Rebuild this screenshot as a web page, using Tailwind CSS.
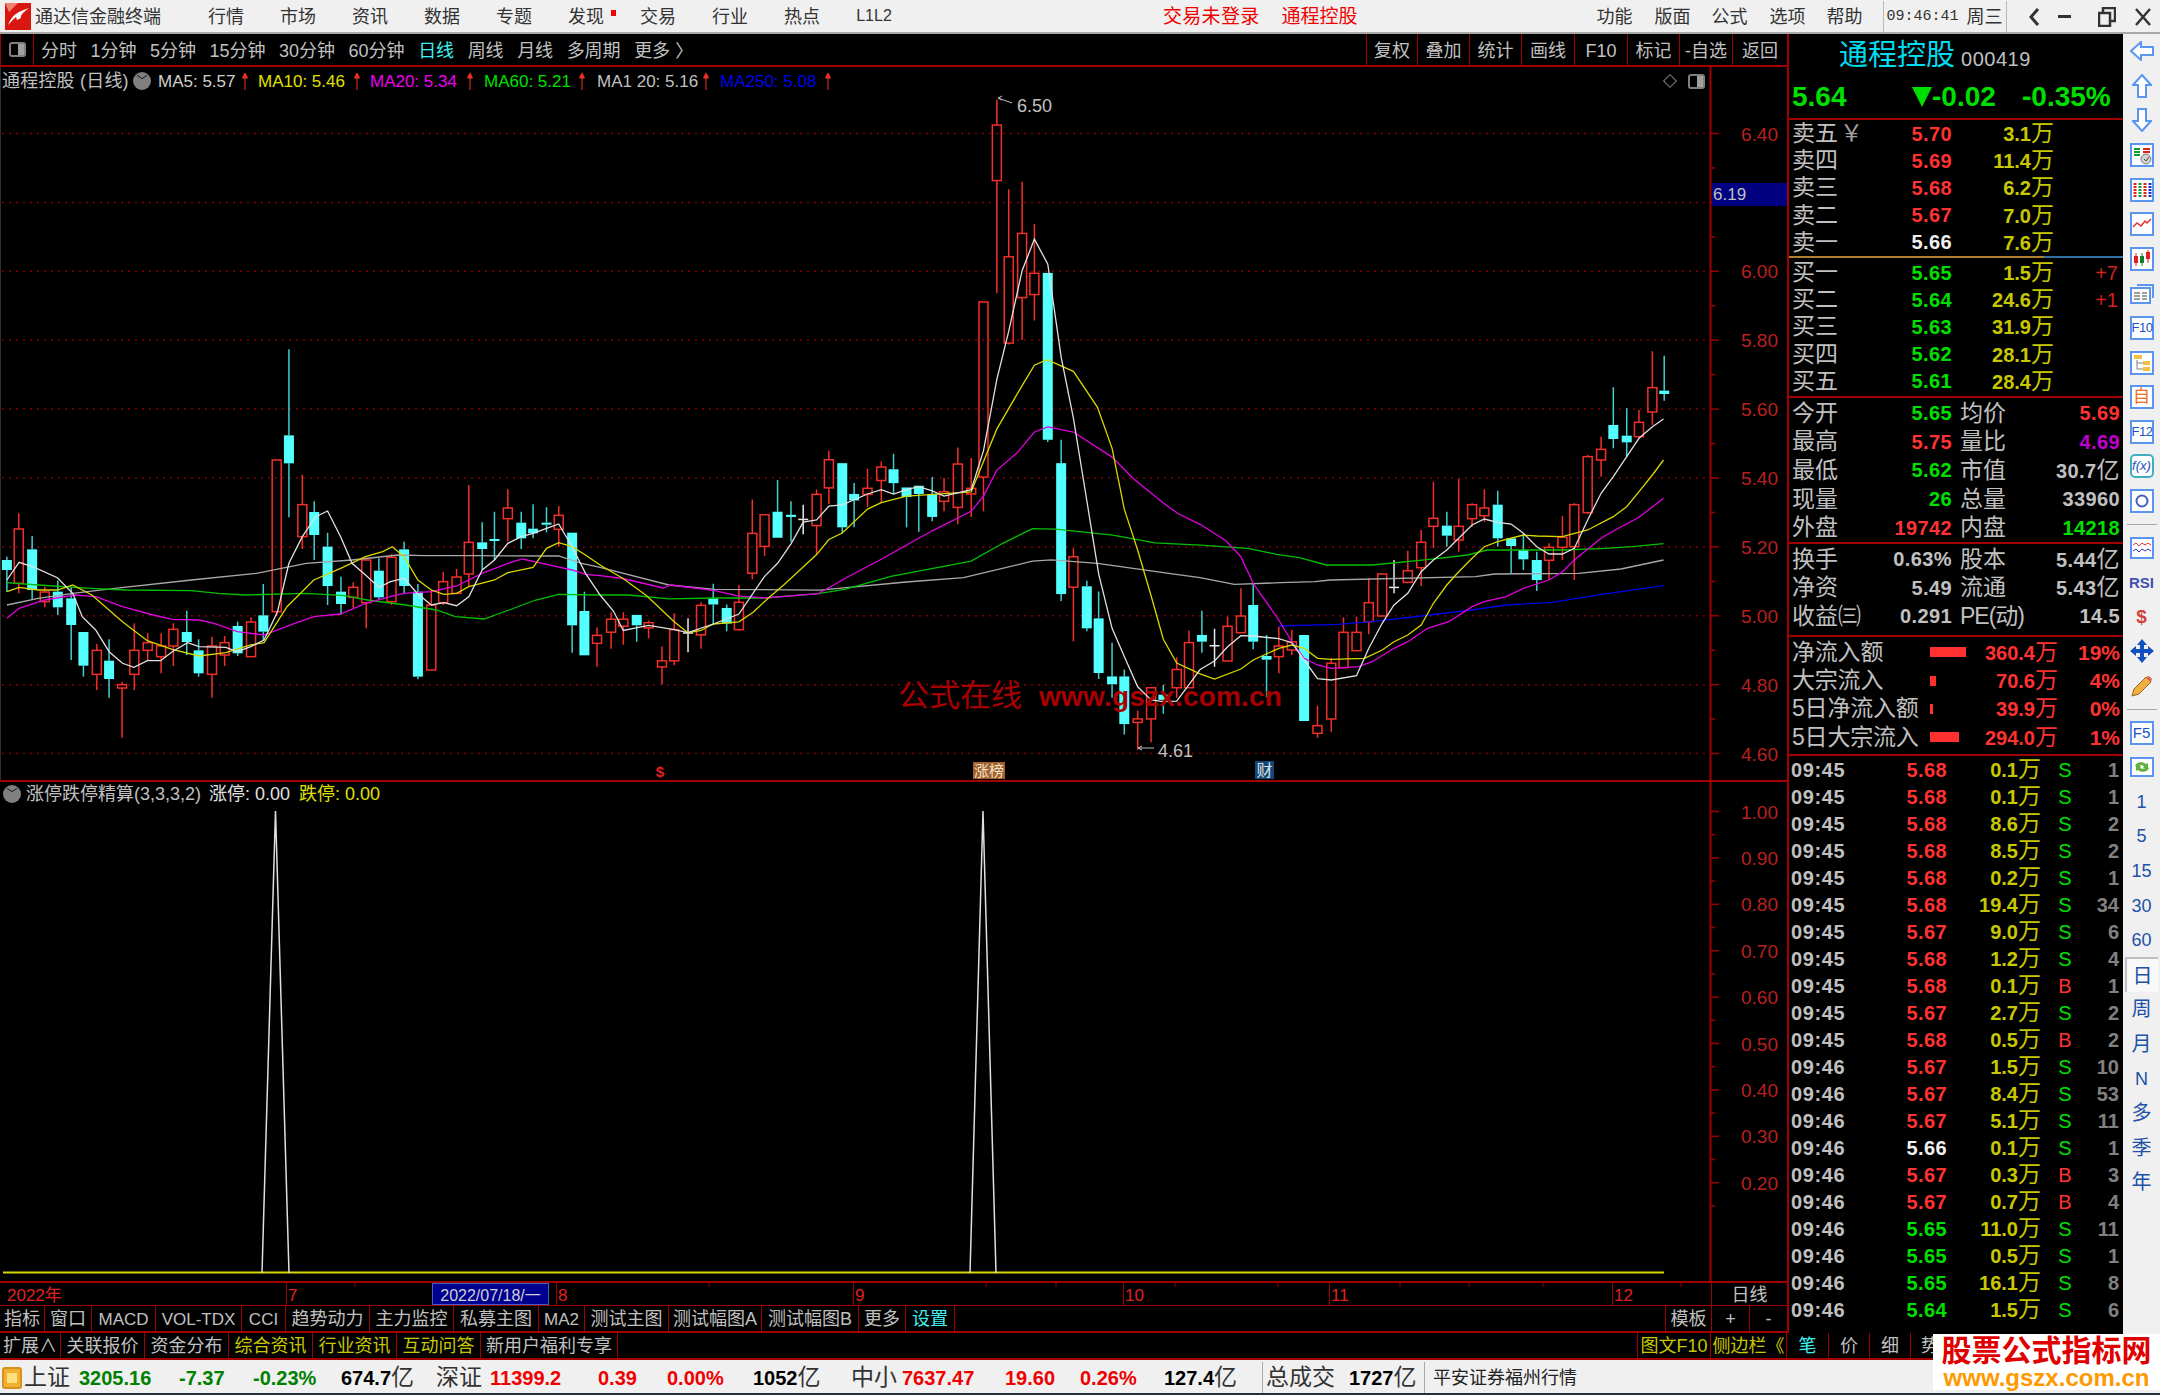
<!DOCTYPE html>
<html lang="zh">
<head>
  <meta charset="UTF-8" />
  <title>通达信金融终端</title>
  <script src="https://cdn.jsdelivr.net/npm/@tailwindcss/browser@4"></script>
</head>
<body class="w-[2160px] h-[1395px] overflow-hidden flex flex-col bg-black text-[18px] text-[#c0c0c0] font-['Liberation_Sans','Noto_Sans_CJK_SC',sans-serif]">

  <!-- title bar -->
  <header class="h-[34px] shrink-0 flex items-center pt-[1px] bg-[#f0f0f0] border-b-2 border-[#a8a8a8] text-[#333] leading-none">
    <svg class="ml-[5px] w-[26px] h-[27px]" viewBox="0 0 26 27"><rect width="26" height="27" fill="#d81810"/><path d="M0 0h13L4 9z" fill="#f08070"/><path d="M3 22C7 12 12 9 24 5 17 10 15 13 16 15l-4 2-1-3c-3 2-5 5-8 8z" fill="#fff"/></svg>
    <span class="ml-[4px] w-[155px]">通达信金融终端</span>
    <nav class="flex">
      <span class="w-[72px] text-center">行情</span>
      <span class="w-[72px] text-center">市场</span>
      <span class="w-[72px] text-center">资讯</span>
      <span class="w-[72px] text-center">数据</span>
      <span class="w-[72px] text-center">专题</span>
      <span class="w-[72px] text-center relative">发现<i class="absolute left-[61px] top-[2px] w-[5px] h-[6px] bg-[#f00000]"></i></span>
      <span class="w-[72px] text-center">交易</span>
      <span class="w-[72px] text-center">行业</span>
      <span class="w-[72px] text-center">热点</span>
      <span class="w-[72px] text-center text-[16px]">L1L2</span>
    </nav>
    <span class="ml-[253px] text-[19px] text-[#f00000] tracking-[0.3px]">交易未登录</span>
    <span class="ml-[22px] text-[19px] text-[#f00000]">通程控股</span>
    <span class="ml-[239px]">功能</span>
    <span class="ml-[22px]">版面</span>
    <span class="ml-[21px]">公式</span>
    <span class="ml-[22px]">选项</span>
    <span class="ml-[21px]">帮助</span>
    <span class="ml-[20px] h-full border-l border-[#b8b8b8] pl-[3px] flex items-center font-['Liberation_Mono'] text-[15px] w-[84px]">09:46:41</span>
    <span>周三</span>
    <span class="ml-[3px] h-full border-l border-[#b8b8b8]"></span>
    <svg class="ml-[21px] w-[12px] h-[18px]" viewBox="0 0 12 18"><path d="M10 1 3 9l7 8" fill="none" stroke="#333" stroke-width="3"/></svg>
    <span class="ml-[18px] w-[13px] h-[3px] bg-[#333]"></span>
    <svg class="ml-[27px] w-[18px] h-[20px]" viewBox="0 0 18 20"><path d="M5 6V1h12v13h-5M1 6h11v13H1z" fill="none" stroke="#333" stroke-width="2.5"/></svg>
    <svg class="ml-[19px] w-[16px] h-[18px]" viewBox="0 0 16 18"><path d="M1 1l14 16M15 1 1 17" fill="none" stroke="#333" stroke-width="2.5"/></svg>
  </header>

  <div class="h-[1326px] shrink-0 flex">
    <div class="w-[2123px] flex flex-col">
      <div class="h-[1299px] flex">

        <!-- chart column -->
        <section class="w-[1787px] flex flex-col">
          <div class="h-[33px] flex items-center border-b-2 border-[#a00000]">
            <div class="w-[34px] h-full flex items-center justify-center border-l border-r border-[#a00000]">
              <span class="w-[17px] h-[15px] rounded-[3px] border-2 border-[#808080] flex justify-end"><i class="w-[6px] bg-[#a0a0a0]"></i></span>
            </div>
            <div class="ml-[7px] pt-[3px] flex gap-[13.5px]">
              <span>分时</span><span>1分钟</span><span>5分钟</span><span>15分钟</span><span>30分钟</span><span>60分钟</span>
              <span class="text-[#40f0f0]">日线</span><span>周线</span><span>月线</span><span>多周期</span><span>更多 〉</span>
            </div>
            <div class="ml-auto h-full flex">
              <span class="w-[51px] text-center border-l border-[#a00000] leading-[34px]">复权</span>
              <span class="w-[52px] text-center border-l border-[#a00000] leading-[34px]">叠加</span>
              <span class="w-[52px] text-center border-l border-[#a00000] leading-[34px]">统计</span>
              <span class="w-[53px] text-center border-l border-[#a00000] leading-[34px]">画线</span>
              <span class="w-[53px] text-center border-l border-[#a00000] leading-[34px]">F10</span>
              <span class="w-[52px] text-center border-l border-[#a00000] leading-[34px]">标记</span>
              <span class="w-[53px] text-center border-l border-[#a00000] leading-[34px]">-自选</span>
              <span class="w-[55px] text-center border-l border-[#a00000] leading-[34px]">返回</span>
            </div>
          </div>

          <!-- main k-line pane -->
          <div class="relative h-[713px] border-l border-[#303030]">
            <svg id="kline" class="block w-[1787px] h-[713px] -ml-[1px]" viewBox="0 67 1787 713"></svg>
            <div class="absolute left-[1px] top-[4px] flex items-center h-[20px] text-[17px] leading-none whitespace-nowrap">
              <span class="w-[124px] text-[18px] tracking-[0.2px]">通程控股 (日线)</span>
              <span class="ml-[7px] w-[18px] h-[18px] rounded-full bg-[#808080] flex items-center justify-center text-black text-[11px]">﹀</span>
              <span class="ml-[7px] w-[84px] text-[#d0d0d0]">MA5: 5.57</span>
              <svg class="w-[6px] h-[18px]" viewBox="0 0 6 18"><path d="M3 18V2M.5 6 3 1l2.500 5z" fill="#f03020" stroke="#f03020"/></svg>
              <span class="ml-[10px] w-[96px] text-[#e0e000]">MA10: 5.46</span>
              <svg class="w-[6px] h-[18px]" viewBox="0 0 6 18"><path d="M3 18V2M.5 6 3 1l2.500 5z" fill="#f03020" stroke="#f03020"/></svg>
              <span class="ml-[10px] w-[97px] text-[#f000f0]">MA20: 5.34</span>
              <svg class="w-[6px] h-[18px]" viewBox="0 0 6 18"><path d="M3 18V2M.5 6 3 1l2.500 5z" fill="#f03020" stroke="#f03020"/></svg>
              <span class="ml-[11px] w-[95px] text-[#00e000]">MA60: 5.21</span>
              <svg class="w-[6px] h-[18px]" viewBox="0 0 6 18"><path d="M3 18V2M.5 6 3 1l2.500 5z" fill="#f03020" stroke="#f03020"/></svg>
              <span class="ml-[12px] w-[106px] text-[#c0c0c0]">MA1 20: 5.16</span>
              <svg class="w-[6px] h-[18px]" viewBox="0 0 6 18"><path d="M3 18V2M.5 6 3 1l2.500 5z" fill="#f03020" stroke="#f03020"/></svg>
              <span class="ml-[11px] w-[105px] text-[#0000e8]">MA250: 5.08</span>
              <svg class="w-[6px] h-[18px]" viewBox="0 0 6 18"><path d="M3 18V2M.5 6 3 1l2.500 5z" fill="#f03020" stroke="#f03020"/></svg>
            </div>
            <div class="absolute left-[1661px] top-[6px] w-[15px] h-[15px] flex items-center justify-center">
              <i class="w-[10px] h-[10px] rotate-45 border border-[#808080]"></i>
            </div>
            <span class="absolute left-[1687px] top-[7px] w-[17px] h-[15px] rounded-[3px] border-2 border-[#808080] flex justify-end"><i class="w-[6px] bg-[#a0a0a0]"></i></span>
            <div class="absolute left-[1711px] top-[116px] w-[75px] h-[23px] bg-[#000080] text-[17px] leading-[24px] pl-[1px]">6.19</div>
          </div>
          <div class="h-[2px] bg-[#a00000]"></div>

          <!-- indicator pane -->
          <div class="relative h-[499px]">
            <svg id="pane2" class="block w-[1787px] h-[499px]" viewBox="0 782 1787 499"></svg>
            <div class="absolute left-[3px] top-[2px] h-[20px] flex items-center text-[18px] leading-none whitespace-nowrap">
              <span class="w-[18px] h-[18px] rounded-full bg-[#808080] flex items-center justify-center text-black text-[11px]">﹀</span>
              <span class="ml-[5px] w-[183px]">涨停跌停精算(3,3,3,2)</span>
              <span class="w-[90px] text-[#e0e0e0]">涨停: 0.00</span>
              <span class="text-[#e0e000]">跌停: 0.00</span>
            </div>
          </div>

          <!-- date row -->
          <div class="relative h-[24px] flex border-t-2 border-[#a00000] text-[17px] text-[#e02020] leading-[25px]">
            <span class="w-[286px] pl-[7px]">2022年</span>
            <span class="w-[146px] pl-[1px] border-l border-[#a00000]">7</span>
            <span class="w-[117px] text-center text-[#d0d0d0] bg-[#000090] border border-[#4060c0] text-[16px] leading-[23px]">2022/07/18/一</span>
            <span class="w-[7px]"></span>
            <span class="w-[297px] pl-[1px] border-l border-[#a00000]">8</span>
            <span class="w-[270px] pl-[1px] border-l border-[#a00000]">9</span>
            <span class="w-[206px] pl-[1px] border-l border-[#a00000]">10</span>
            <span class="w-[283px] pl-[1px] border-l border-[#a00000]">11</span>
            <span class="w-[99px] pl-[1px] border-l border-[#a00000]">12</span>
            <span class="flex-1 text-center text-[#c0c0c0] text-[18px] border-l border-[#a00000]">日线</span>
            <svg class="absolute left-0 top-0 w-[1711px] h-[4px]" viewBox="0 0 1711 4"><path d="M355 0v4M709 0v4M986 0v4M1056 0v4M1175 0v4M1278 0v4M1400 0v4M1469 0v4M1543 0v4M1681 0v4" stroke="#a00000"/></svg>
          </div>

          <!-- button row -->
          <div class="h-[28px] flex border-t border-b-2 border-[#a00000] leading-[27px] whitespace-nowrap">
            <span class="w-[45px] text-center border-r border-[#a00000]">指标</span>
            <span class="w-[47px] text-center border-r border-[#a00000]">窗口</span>
            <span class="w-[64px] text-center border-r border-[#a00000] text-[17px]">MACD</span>
            <span class="w-[86px] text-center border-r border-[#a00000] text-[17px]">VOL-TDX</span>
            <span class="w-[44px] text-center border-r border-[#a00000] text-[17px]">CCI</span>
            <span class="w-[84px] text-center border-r border-[#a00000]">趋势动力</span>
            <span class="w-[84px] text-center border-r border-[#a00000]">主力监控</span>
            <span class="w-[85px] text-center border-r border-[#a00000]">私募主图</span>
            <span class="w-[46px] text-center border-r border-[#a00000] text-[17px]">MA2</span>
            <span class="w-[84px] text-center border-r border-[#a00000]">测试主图</span>
            <span class="w-[93px] text-center border-r border-[#a00000]">测试幅图A</span>
            <span class="w-[97px] text-center border-r border-[#a00000]">测试幅图B</span>
            <span class="w-[47px] text-center border-r border-[#a00000]">更多</span>
            <span class="w-[49px] text-center border-r border-[#a00000] text-[#40f0f0]">设置</span>
            <span class="flex-1"></span>
            <span class="w-[46px] text-center border-l border-[#a00000]">模板</span>
            <span class="w-[38px] text-center border-l border-[#a00000]">+</span>
            <span class="w-[38px] text-center border-l border-[#a00000]">-</span>
          </div>
        </section>

        <!-- quote panel -->
        <aside class="w-[336px] flex flex-col border-l-2 border-[#a00000] whitespace-nowrap">
          <div class="h-[42px] flex items-end pl-[50px]">
            <span class="text-[29px] leading-[42px] text-[#00dcf0]">通程控股</span>
            <span class="ml-[6px] text-[20px] leading-[34px] tracking-[0.5px]">000419</span>
          </div>
          <div class="h-[44px] flex items-center border-b-2 border-[#a00000] pl-[3px] font-bold text-[28px] text-[#00e000] leading-none">
            <span class="w-[120px]">5.64</span>
            <svg class="w-[20px] h-[20px]" viewBox="0 0 20 20"><path d="M0 0h20L10 20z" fill="#00e000"/></svg>
            <span class="w-[90px]">-0.02</span>
            <span>-0.35%</span>
          </div>
          <div id="sell" class="h-[136px]"></div>
          <div class="h-[2px] flex"><i class="w-[255px] bg-[#b08030]"></i><i class="flex-1 bg-[#3070a0]"></i></div>
          <div id="buy" class="h-[138px] pt-[1px]"></div>
          <div class="h-[2px] bg-[#a00000]"></div>

          <div id="stats1" class="h-[144px] pt-[1px]"></div>
          <div class="h-[2px] bg-[#a00000]"></div>
          <div id="stats2" class="h-[91px] pt-[1px]"></div>
          <div class="h-[2px] bg-[#a00000]"></div>

          <div id="flow" class="h-[117px] pt-[1px]"></div>
          <div class="h-[2px] bg-[#a00000]"></div>

          <div id="ticks" class="flex-1"></div>
        </aside>
      </div>

      <!-- second button row -->
      <div class="h-[27px] flex border-b-2 border-[#a00000] leading-[27px] whitespace-nowrap">
        <span class="w-[61px] text-center border-r border-[#a00000]">扩展∧</span>
        <span class="w-[84px] text-center border-r border-[#a00000]">关联报价</span>
        <span class="w-[84px] text-center border-r border-[#a00000]">资金分布</span>
        <span class="w-[84px] text-center border-r border-[#a00000] text-[#c8c800]">综合资讯</span>
        <span class="w-[84px] text-center border-r border-[#a00000] text-[#c8c800]">行业资讯</span>
        <span class="w-[84px] text-center border-r border-[#a00000] text-[#c8c800]">互动问答</span>
        <span class="w-[137px] text-center border-r border-[#a00000]">新用户福利专享</span>
        <span class="w-[1019px]"></span>
        <span class="w-[73px] text-center border-l border-[#a00000] text-[#c8c800]">图文F10</span>
        <span class="w-[76px] text-center border-l border-[#a00000] text-[#c8c800]">侧边栏《</span>
        <span class="w-[42px] text-center border-l border-[#a00000] text-[#40f0f0]">笔</span>
        <span class="w-[41px] text-center border-l border-[#a00000]">价</span>
        <span class="w-[41px] text-center border-l border-[#a00000]">细</span>
        <span class="w-[42px] pl-[10px] border-l border-[#a00000]">势</span>
      </div>
    </div>

    <!-- right icon strip -->
    <nav id="strip" class="w-[37px] bg-[#f0f0f0] flex flex-col items-center text-[#2050a8] text-[18px] leading-none">
      <div class="h-[34.6px] flex items-center"><svg class="w-[24px] h-[20px]" viewBox="0 0 24 20"><path d="M1 10 11 1v5h12v8H11v5z" fill="#fff" stroke="#5a96f0" stroke-width="2"/></svg></div>
      <div class="h-[34.6px] flex items-center"><svg class="w-[20px] h-[24px]" viewBox="0 0 20 24"><path d="M10 1l9 10h-5v12H6V11H1z" fill="#fff" stroke="#5a96f0" stroke-width="2"/></svg></div>
      <div class="h-[34.6px] flex items-center"><svg class="w-[20px] h-[24px]" viewBox="0 0 20 24"><path d="M10 23l9-10h-5V1H6v12H1z" fill="#fff" stroke="#5a96f0" stroke-width="2"/></svg></div>
      <div class="h-[34.6px] flex items-center"><svg class="w-[24px] h-[24px]" viewBox="0 0 24 24"><rect x="1" y="1" width="22" height="22" fill="#fff" stroke="#5a96f0" stroke-width="2"/><path d="M4 6h6M4 9h6M4 12h6" stroke="#10a030" stroke-width="2"/><path d="M13 6h7M13 9h7M13 12h4" stroke="#e02020" stroke-width="2"/><circle cx="16" cy="16" r="5" fill="#d0d0d0" stroke="#808080"/><path d="M14 16l2 2 3-4" fill="none" stroke="#505050"/></svg></div>
      <div class="h-[34.6px] flex items-center"><svg class="w-[24px] h-[24px]" viewBox="0 0 24 24"><rect x="1" y="1" width="22" height="22" fill="#fff" stroke="#5a96f0" stroke-width="2"/><path d="M5 5v14" stroke="#e02020" stroke-width="3" stroke-dasharray="2 1"/><path d="M10 5v14" stroke="#10a030" stroke-width="3" stroke-dasharray="2 1"/><path d="M15 5v14" stroke="#e02020" stroke-width="3" stroke-dasharray="2 1"/><path d="M20 5v14" stroke="#2030d0" stroke-width="3" stroke-dasharray="2 1"/></svg></div>
      <div class="h-[34.6px] flex items-center"><svg class="w-[24px] h-[24px]" viewBox="0 0 24 24"><rect x="1" y="1" width="22" height="22" fill="#fff" stroke="#5a96f0" stroke-width="2"/><path d="M3 15l4-4 4 3 4-5 2 2 4-4" fill="none" stroke="#e83030" stroke-width="1.500"/></svg></div>
      <div class="h-[34.6px] flex items-center"><svg class="w-[24px] h-[24px]" viewBox="0 0 24 24"><rect x="1" y="1" width="22" height="22" fill="#fff" stroke="#5a96f0" stroke-width="2"/><path d="M6 6v13M18 3v13" stroke="#e02020"/><path d="M12 6v13" stroke="#108030"/><rect x="4" y="9" width="4" height="7" fill="#e02020"/><rect x="10" y="9" width="4" height="7" fill="#108030"/><rect x="16" y="5" width="4" height="7" fill="#e02020"/></svg></div>
      <div class="h-[34.6px] flex items-center"><svg class="w-[24px] h-[22px]" viewBox="0 0 24 22"><path d="M7 3h16v13" fill="none" stroke="#5a96f0" stroke-width="2"/><rect x="1" y="6" width="19" height="15" fill="#fff" stroke="#5a96f0" stroke-width="2"/><path d="M4 11h6M12 11h5M4 14h6M12 14h5M4 17h6M12 17h5" stroke="#808080" stroke-width="1.500"/></svg></div>
      <div class="h-[34.6px] flex items-center"><span class="w-[24px] h-[24px] border-2 border-[#5a96f0] bg-white text-[#2050c0] text-[13px] tracking-[-0.5px] leading-[20px] text-center">F10</span></div>
      <div class="h-[34.6px] flex items-center"><svg class="w-[24px] h-[24px]" viewBox="0 0 24 24"><rect x="1" y="1" width="22" height="22" fill="#fff" stroke="#5a96f0" stroke-width="2"/><path d="M7 9v9h6M7 12h6" fill="none" stroke="#808080"/><rect x="4" y="4" width="8" height="4" fill="#f0c040"/><rect x="13" y="10" width="7" height="4" fill="#f0c040"/><rect x="13" y="16" width="7" height="4" fill="#f0c040"/></svg></div>
      <div class="h-[34.6px] flex items-center"><span class="w-[24px] h-[24px] border-2 border-[#5a96f0] bg-white text-[#f07020] text-[17px] leading-[20px] text-center">自</span></div>
      <div class="h-[34.6px] flex items-center"><span class="w-[24px] h-[24px] border-2 border-[#5a96f0] bg-white text-[#2050c0] text-[13px] tracking-[-0.5px] leading-[20px] text-center">F12</span></div>
      <div class="h-[34.6px] flex items-center"><span class="w-[24px] h-[24px] border-2 rounded-[5px] border-[#40b0c0] bg-white text-[#2050c0] text-[13px] italic leading-[20px] text-center">f(x)</span></div>
      <div class="h-[34.6px] flex items-center"><svg class="w-[24px] h-[24px]" viewBox="0 0 24 24"><rect x="1" y="1" width="22" height="22" fill="#fff" stroke="#5a96f0" stroke-width="2"/><circle cx="12" cy="12" r="5.500" fill="none" stroke="#4060c0" stroke-width="2"/></svg></div>
      <div class="h-[12px] flex items-center w-[30px]"><i class="w-full h-[1px] bg-[#a8a8a8]"></i></div>
      <div class="h-[34.6px] flex items-center"><svg class="w-[24px] h-[22px]" viewBox="0 0 24 22"><rect x="1" y="1" width="22" height="20" fill="#fff" stroke="#5a96f0" stroke-width="2"/><path d="M3 8l3-2 3 3 3-3 3 2 3-2 3 2" fill="none" stroke="#e03030"/><path d="M3 14l3-2 3 3 3-3 3 2 3-2 3 2" fill="none" stroke="#3030d0"/></svg></div>
      <div class="h-[34.6px] flex items-center text-[15px] font-bold text-[#4050b0]">RSI</div>
      <div class="h-[34.6px] flex items-center text-[19px] font-bold text-[#d04040]">$</div>
      <div class="h-[34.6px] flex items-center"><svg class="w-[24px] h-[24px]" viewBox="0 0 24 24"><path d="M12 0l5 6h-3v4h4V7l6 5-6 5v-3h-4v4h3l-5 6-5-6h3v-4H6v3l-6-5 6-5v3h4V6H7z" fill="#1050c0"/></svg></div>
      <div class="h-[34.6px] flex items-center"><svg class="w-[22px] h-[22px]" viewBox="0 0 22 22"><path d="M1 21l2-7L15 2l5 5L8 19z" fill="#f0b040" stroke="#a06020"/><path d="M15 2l5 5 1-3-3-3z" fill="#e06060"/></svg></div>
      <div class="h-[12px] flex items-center w-[30px]"><i class="w-full h-[1px] bg-[#a8a8a8]"></i></div>
      <div class="h-[34.6px] flex items-center"><span class="w-[24px] h-[24px] border-2 border-[#5a96f0] bg-white text-[#2050c0] text-[15px] leading-[20px] text-center">F5</span></div>
      <div class="h-[34.6px] flex items-center"><svg class="w-[24px] h-[20px]" viewBox="0 0 24 20"><rect x="1" y="1" width="22" height="18" fill="#fff" stroke="#5a96f0" stroke-width="2"/><path d="M5 9c1-4 8-5 11-2l2-1v5h-5l1-2c-2-1-5-1-6 1zM19 11c-1 4-8 5-11 2l-2 1V9h5l-1 2c2 1 5 1 6-1z" fill="#60b040"/></svg></div>
      <div class="h-[34.6px] flex items-center">1</div>
      <div class="h-[34.6px] flex items-center">5</div>
      <div class="h-[34.6px] flex items-center">15</div>
      <div class="h-[34.6px] flex items-center">30</div>
      <div class="h-[34.6px] flex items-center">60</div>
      <div class="h-[34.6px] w-[33px] flex items-center justify-center border-t-2 border-l-2 border-[#c0c0c0] bg-[#f8f8f8] text-[20px]">日</div>
      <div class="h-[34.6px] flex items-center text-[20px]">周</div>
      <div class="h-[34.6px] flex items-center text-[20px]">月</div>
      <div class="h-[34.6px] flex items-center">N</div>
      <div class="h-[34.6px] flex items-center text-[20px]">多</div>
      <div class="h-[34.6px] flex items-center text-[20px]">季</div>
      <div class="h-[34.6px] flex items-center text-[20px]">年</div>
    </nav>
  </div>

  <!-- status bar -->
  <footer class="h-[33px] shrink-0 flex items-center pt-[2px] bg-[#f0f0f0] text-[20px] font-bold text-black leading-none whitespace-nowrap">
    <span class="ml-[2px] w-[20px] h-[22px] rounded-[3px] bg-[#f0b030] border-2 border-[#d89020] flex items-center justify-center"><i class="w-[10px] h-[10px] bg-[#ffe080]"></i></span>
    <span class="ml-[2px] w-[55px] text-[23px] font-normal text-[#333]">上证</span>
    <span class="w-[100px] text-[#008000]">3205.16</span>
    <span class="w-[74px] text-[#008000]">-7.37</span>
    <span class="w-[88px] text-[#008000]">-0.23%</span>
    <span class="w-[95px]">674.7<span class="text-[23px] font-normal text-[#333]">亿</span></span>
    <span class="w-[54px] text-[23px] font-normal text-[#333]">深证</span>
    <span class="w-[108px] text-[#f00000]">11399.2</span>
    <span class="w-[69px] text-[#f00000]">0.39</span>
    <span class="w-[86px] text-[#f00000]">0.00%</span>
    <span class="w-[98px]">1052<span class="text-[23px] font-normal text-[#333]">亿</span></span>
    <span class="w-[51px] text-[23px] font-normal text-[#333]">中小</span>
    <span class="w-[103px] text-[#f00000]">7637.47</span>
    <span class="w-[75px] text-[#f00000]">19.60</span>
    <span class="w-[84px] text-[#f00000]">0.26%</span>
    <span class="w-[98px]">127.4<span class="text-[23px] font-normal text-[#333]">亿</span></span>
    <span class="h-full border-l border-[#a8a8a8] pl-[3px] w-[87px] flex items-center text-[23px] font-normal text-[#333]">总成交</span>
    <span class="w-[75px]">1727<span class="text-[23px] font-normal text-[#333]">亿</span></span>
    <span class="h-full border-l border-[#a8a8a8] pl-[8px] flex items-center text-[18px] font-normal text-[#222]">平安证券福州行情</span>
  </footer>
  <div class="h-[2px] shrink-0 bg-[#203040]"></div>

  <!-- site stamp in the corner -->
  <div class="absolute left-[1933px] top-[1334px] w-[227px] h-[56px] bg-white flex flex-col items-center pt-[2px] leading-none">
    <span class="text-[30px] font-bold text-[#e00000]">股票公式指标网</span>
    <span class="text-[24px] font-bold text-[#ff9900]">www.gszx.com.cn</span>
  </div>

<script>
// candles and moving averages were read off three stretches of the chart,
// each with its own x offset and vertical scale
const stretches = [
  { x0: 0, y0: 330, sy: 3,
    bars: [[18,0,680,690,720,785],[49,1,550,597,760,790],[84,0,618,658,780,810],[117,1,770,786,815,832],[151,0,752,785,832,855],[186,0,770,805,885,990],[218,0,906,906,1007,1040],[253,1,942,961,1033,1080],[285,0,928,992,1047,1103],[319,1,1055,1064,1074,1223],[351,1,880,961,1033,1080],[386,1,910,938,961,990],[421,1,910,948,980,1030],[453,1,880,898,948,1008],[488,0,842,906,936,975],[519,0,928,961,1030,1040],[554,1,920,948,1033,1103],[587,1,918,938,975,1008],[621,0,875,888,970,978],[656,1,862,876,980,980],[688,0,762,856,905,930],[723,1,390,390,845,858],[755,0,58,316,400,562],[790,1,434,524,620,657],[821,0,514,546,615,690],[856,0,608,650,768,825],[891,0,740,785,822,855],[923,1,757,772,802,835],[957,1,685,690,818,895],[990,0,685,722,802,808],[1023,1,672,682,815,825],[1056,0,635,658,768,790],[1092,0,762,785,1040,1048],[1127,1,780,825,1020,1020],[1158,1,725,755,818,825],[1193,1,717,741,790,790],[1225,1,465,637,732,770],[1260,0,577,637,657,720],[1292,0,545,627,633,690],[1327,1,478,534,566,634],[1362,0,545,578,625,657],[1393,0,523,596,610,625],[1428,0,532,578,584,607],[1460,1,528,556,598,650],[1495,0,608,608,886,968],[1527,0,785,843,976,976],[1560,1,892,916,940,1010]],
    ma5: [[18,750],[50,697],[90,712],[150,743],[190,790],[215,860],[250,900],[285,965],[320,1000],[350,1012],[385,992],[420,992],[450,965],[490,938],[520,950],[590,952],[620,965],[655,950],[690,930],[725,845],[755,700],[790,620],[825,560],[856,543],[890,620],[920,700],[955,735],[990,772],[1020,755],[1056,745],[1090,790],[1127,825],[1160,818],[1193,827],[1225,800],[1260,720],[1292,690],[1327,640],[1362,620],[1393,610],[1428,595],[1460,582],[1495,650],[1530,730],[1568,795]],
    ma10: [[18,785],[50,772],[100,780],[150,780],[190,765],[240,795],[320,875],[385,932],[450,958],[520,978],[590,968],[655,945],[690,938],[750,830],[820,750],[890,715],[955,680],[1000,665],[1025,650],[1056,680],[1092,750],[1127,780],[1160,793],[1193,790],[1225,770],[1292,750],[1327,728],[1393,712],[1428,655],[1460,638],[1495,650],[1530,675],[1568,705]],
    ma20: [[18,865],[50,835],[117,810],[195,795],[250,800],[320,830],[400,855],[450,868],[520,870],[560,880],[620,905],[690,915],[770,880],[820,860],[890,852],[955,820],[1020,800],[1056,790],[1127,785],[1193,768],[1260,730],[1327,700],[1365,687],[1428,703],[1495,720],[1530,733],[1568,737]],
    ma60: [[18,758],[100,765],[235,775],[330,780],[500,782],[570,790],[640,795],[800,790],[900,797],[960,810],[1060,825],[1140,840],[1190,860],[1265,867],[1330,840],[1400,810],[1460,793],[1568,795]],
    ma120: [[18,825],[100,805],[190,790],[300,775],[500,750],[670,730],[800,700],[920,690],[1040,675],[1110,677],[1240,677],[1460,678],[1520,700],[1568,712]],
    ma250: [] },
  { x0: 600, y0: 80, sy: 2.307,
    bars: [[29,1,1228,1244,1274,1312],[61,1,1228,1244,1260,1303],[96,0,1234,1234,1258,1296],[127,1,1247,1252,1264,1288],[162,1,1307,1340,1354,1394],[194,1,1230,1268,1340,1350],[230,2,1242,1274,1277,1320],[264,1,1205,1212,1280,1312],[296,0,1162,1196,1210,1258],[331,0,1210,1218,1254,1272],[363,1,1165,1205,1268,1270],[398,1,968,1046,1138,1152],[430,1,1003,1003,1076,1098],[464,0,923,996,1056,1056],[499,0,972,1003,1008,1065],[531,2,980,1012,1014,1048],[566,1,945,956,1028,1095],[598,1,855,876,941,978],[633,0,884,884,1032,1045],[664,0,930,955,970,1032],[699,1,897,942,956,985],[735,1,880,893,924,975],[767,0,862,898,930,955],[801,0,940,940,962,1032],[833,0,936,936,955,1042],[868,0,916,955,1008,1018],[899,1,918,950,972,995],[935,1,848,886,986,1025],[970,1,872,942,955,1008],[1002,1,512,512,916,995],[1037,1,45,104,232,492],[1068,1,252,408,607,610],[1103,1,235,354,502,600],[1135,1,332,446,495,555],[1170,0,445,445,830,835],[1205,0,830,884,1186,1202],[1237,1,1080,1100,1170,1295],[1272,0,1155,1168,1265,1272],[1303,0,1180,1242,1368,1382],[1338,0,1298,1376,1394,1425],[1370,0,1360,1376,1486,1510],[1405,1,1455,1474,1482,1545],[1440,1,1402,1402,1474,1528],[1472,0,1395,1418,1430,1462],[1507,1,1332,1360,1402,1425],[1539,1,1270,1298,1402,1402]],
    ma5: [[35,1225],[61,1270],[127,1258],[194,1268],[230,1275],[296,1255],[363,1232],[430,1145],[464,1115],[499,1070],[531,1020],[566,1015],[598,983],[633,980],[699,955],[735,945],[767,955],[801,945],[833,938],[868,948],[899,960],[970,945],[1002,855],[1037,690],[1068,580],[1103,440],[1135,367],[1170,425],[1205,640],[1237,780],[1272,970],[1303,1140],[1338,1265],[1370,1330],[1405,1400],[1440,1430],[1472,1434],[1507,1433],[1539,1395],[1568,1360]],
    ma10: [[60,1150],[122,1190],[194,1250],[230,1275],[264,1270],[296,1255],[363,1250],[400,1228],[440,1195],[480,1165],[566,1095],[598,1060],[633,1045],[699,990],[735,975],[801,960],[970,950],[1002,880],[1037,805],[1103,705],[1135,658],[1168,645],[1237,672],[1300,755],[1338,850],[1370,990],[1405,1085],[1440,1190],[1472,1290],[1507,1345],[1568,1370]],
    ma20: [[60,1150],[165,1172],[185,1165],[300,1178],[360,1190],[430,1195],[570,1185],[640,1150],[730,1108],[868,1040],[970,995],[1002,960],[1037,900],[1090,860],[1135,812],[1170,800],[1237,812],[1338,870],[1394,920],[1470,975],[1510,1000],[1568,1025]],
    ma60: [[75,1188],[180,1197],[300,1195],[430,1195],[570,1185],[640,1175],[760,1145],[970,1110],[1050,1070],[1130,1035],[1190,1036],[1340,1050],[1450,1068],[1568,1073]],
    ma120: [[180,1165],[300,1175],[575,1177],[800,1158],[950,1148],[1130,1110],[1180,1107],[1300,1115],[1500,1140],[1568,1148]],
    ma250: [] },
  { x0: 1200, y0: 330, sy: 3,
    bars: [[5,0,842,915,935,968],[38,2,896,945,948,1010],[72,1,860,889,993,993],[107,1,775,858,908,908],[139,0,762,825,935,958],[174,0,915,978,989,1102],[206,1,890,948,980,1030],[240,1,900,935,960,975],[272,0,915,915,1173,1173],[307,1,1127,1187,1210,1223],[343,1,985,1000,1167,1205],[375,1,862,907,1013,1013],[409,1,860,907,962,962],[441,1,745,818,875,912],[476,1,730,732,858,858],[507,2,690,770,773,790],[543,1,662,722,757,760],[578,1,600,637,713,768],[610,1,455,565,589,655],[645,0,545,587,617,650],[676,1,447,589,630,665],[711,1,520,524,566,590],[743,1,478,534,557,575],[778,0,482,524,625,650],[813,0,625,625,648,730],[845,0,612,660,688,720],[880,0,665,690,750,783],[912,1,640,652,691,750],[947,1,558,622,652,690],[978,1,520,524,650,750],[1013,1,375,380,548,552],[1048,1,320,358,390,440],[1080,0,172,285,327,355],[1115,0,235,317,337,380],[1147,1,240,277,320,325],[1182,1,64,173,246,285],[1213,0,77,182,192,212]],
    ma5: [[38,993],[72,950],[107,917],[139,918],[206,926],[240,938],[272,990],[307,1046],[343,1050],[409,1037],[441,955],[476,880],[507,825],[543,790],[578,725],[610,690],[645,660],[676,625],[711,585],[743,567],[778,577],[813,582],[845,610],[880,650],[912,672],[947,672],[978,655],[1013,570],[1048,490],[1080,440],[1115,380],[1147,325],[1182,290],[1211,267]],
    ma10: [[38,1047],[107,1017],[139,990],[206,955],[240,945],[272,955],[307,985],[343,988],[430,985],[476,960],[507,935],[543,915],[578,885],[610,820],[645,765],[676,725],[711,685],[743,650],[778,635],[845,615],[880,618],[947,620],[1013,600],[1080,560],[1115,530],[1147,485],[1182,435],[1211,390]],
    ma20: [[68,632],[107,680],[139,760],[206,870],[240,935],[272,985],[307,1005],[343,1015],[415,1010],[450,995],[507,955],[543,935],[595,895],[650,875],[711,830],[743,815],[800,800],[845,775],[912,750],[947,725],[978,690],[1048,625],[1080,603],[1147,562],[1211,505]],
    ma60: [[125,655],[200,673],[260,683],[330,705],[450,705],[600,688],[700,675],[750,660],[950,660],[1060,655],[1130,650],[1211,641]],
    ma120: [[90,763],[210,758],[300,755],[340,750],[720,740],[770,732],[990,730],[1100,717],[1211,690]],
    ma250: [[205,888],[360,883],[450,875],[600,855],[710,840],[800,825],[920,817],[1050,793],[1211,767]] }
];

const RED = '#f03028', CYAN = '#54ffff';
const rx = (s, v) => s.x0 + v / 2.613;
const ry = (s, v) => s.y0 + v / s.sy;

function bar(s, [vx, kind, hi, top, bot, lo]) {
  const x = rx(s, vx), h = ry(s, hi), t = ry(s, top), b = ry(s, bot), l = ry(s, lo);
  const wicks = (c, w) => `<path d="M${x} ${h}V${t}M${x} ${b}V${l}" stroke="${c}" stroke-width="${w}"/>`;
  if (kind === 0) {
    return wicks('#40d0d0', 1.5) + `<rect x="${x - 5}" y="${t}" width="10" height="${Math.max(b - t, 2)}" fill="${CYAN}"/>`;
  }
  if (kind === 1) {
    return wicks(RED, 1.5) + `<rect x="${x - 4.5}" y="${t}" width="9" height="${b - t}" fill="none" stroke="${RED}" stroke-width="1.5"/>`;
  }
  return wicks('#e8e8e8', 1.5) + `<rect x="${x - 5}" y="${t}" width="10" height="1.5" fill="#e8e8e8"/>`;
}

function maLine(key, color) {
  const pts = stretches.flatMap(s => s[key].map(([vx, vy]) => `${rx(s, vx).toFixed(1)},${ry(s, vy).toFixed(1)}`));
  return `<polyline points="${pts.join(' ')}" fill="none" stroke="${color}" stroke-width="1.3"/>`;
}

function axis(labels, firstY, step, count) {
  let out = `<path d="M1710.5 0V1400" stroke="#a00000" stroke-width="2"/>`;
  for (let i = 0; i < count; i++) {
    const y = firstY + step * i / 2;
    out += `<path d="M1711 ${y}h${i % 2 ? 4 : 8}" stroke="#a00000" stroke-width="1.5"/>`;
  }
  labels.forEach((txt, i) => {
    const y = firstY + step * i;
    if (txt) out += `<text x="1778" y="${y + 7}" text-anchor="end" font-size="19" fill="#b82020">${txt}</text>`;
  });
  return out;
}

// main pane
let k = '';
const prices = ['6.40','','6.00','5.80','5.60','5.40','5.20','5.00','4.80','4.60'];
prices.forEach((_, i) => {
  k += `<path d="M2 ${133.5 + 68.9 * i}H1710" stroke="#800000" stroke-width="1.5" stroke-dasharray="2 5"/>`;
});
k += axis(prices, 133.5, 68.9, 20);
stretches.forEach(s => s.bars.forEach(b => k += bar(s, b)));
k += maLine('ma250', '#0000e8') + maLine('ma120', '#a8a8a8') + maLine('ma60', '#00c000');
k += maLine('ma20', '#e000e0') + maLine('ma10', '#d8d800') + maLine('ma5', '#e0e0e0');
k += `<path d="M1002 100l-4-2 4-2M998 98l14 5" fill="none" stroke="#c0c0c0"/><text x="1017" y="112" font-size="18" fill="#c0c0c0">6.50</text>`;
k += `<path d="M1142 750l-4-2 4-2M1138 748h16" fill="none" stroke="#c0c0c0"/><text x="1158" y="757" font-size="18" fill="#c0c0c0">4.61</text>`;
k += `<text x="898" y="706" font-size="31" fill="#a80000">公式在线</text>`;
k += `<text x="1039" y="706" font-size="28" font-weight="700" fill="#a80000" letter-spacing="0.2">www.gszx.com.cn</text>`;
k += `<text x="660" y="777" font-size="15" font-weight="700" fill="#e02020" text-anchor="middle">$</text>`;
k += `<rect x="973" y="762" width="32" height="17" fill="#a06030"/><text x="989" y="776" font-size="15" fill="#f0e0c0" text-anchor="middle">涨榜</text>`;
k += `<rect x="1255" y="761" width="19" height="18" fill="#104878"/><text x="1264.5" y="776" font-size="16" fill="#e0e0e0" text-anchor="middle">财</text>`;
document.getElementById('kline').innerHTML = k;

// indicator pane
let p = axis(['1.00','0.90','0.80','0.70','0.60','0.50','0.40','0.30','0.20'], 811.5, 46.4, 18);
p += `<path d="M3 1272.5H1664" stroke="#d8d800" stroke-width="2"/>`;
p += `<polyline points="262,1273 275.5,811 289,1273" fill="none" stroke="#e0e0e0" stroke-width="1.5"/>`;
p += `<polyline points="970,1273 983,811 996,1273" fill="none" stroke="#e0e0e0" stroke-width="1.5"/>`;
document.getElementById('pane2').innerHTML = p;

// quote panel rows
const vol = v => `${v}<span class="text-[23px] font-normal">万</span>`;
const quoteRow = ([label, price, color, amount, extra]) =>
  `<div class="h-[27.2px] flex items-center leading-none">
    <div class="w-[163px] pl-[3px] flex justify-between items-center"><span class="text-[23px]">${label}</span><span class="text-[20px] font-bold tracking-[0.4px] ${color}">${price}</span></div>
    <div class="w-[102px] text-right text-[20px] font-bold text-[#c8c800]">${vol(amount)}</div>
    <div class="w-[64px] text-right text-[20px] text-[#d02020]">${extra || ''}</div>
  </div>`;
document.getElementById('sell').innerHTML = [
  ['卖五<span class="ml-[2px] text-[#a0a0a0]">￥</span>','5.70','text-[#ff3232]','3.1'],['卖四','5.69','text-[#ff3232]','11.4'],['卖三','5.68','text-[#ff3232]','6.2'],
  ['卖二','5.67','text-[#ff3232]','7.0'],['卖一','5.66','text-[#f0f0f0]','7.6']
].map(quoteRow).join('');
document.getElementById('buy').innerHTML = [
  ['买一','5.65','text-[#00e000]','1.5','+7'],['买二','5.64','text-[#00e000]','24.6','+1'],['买三','5.63','text-[#00e000]','31.9'],
  ['买四','5.62','text-[#00e000]','28.1'],['买五','5.61','text-[#00e000]','28.4']
].map(quoteRow).join('');

const yi = v => v.replace('亿', '<span class="text-[23px] font-normal">亿</span>');
const statRow = ([a, av, ac, b, bv, bc]) =>
  `<div class="h-[28.6px] flex items-center leading-none">
    <div class="w-[163px] pl-[3px] flex justify-between items-center"><span class="text-[23px]">${a}</span><span class="text-[20px] font-bold tracking-[0.4px] ${ac}">${av}</span></div>
    <div class="ml-[8px] w-[160px] flex justify-between items-center"><span class="text-[23px]">${b}</span><span class="text-[20px] font-bold tracking-[0.4px] ${bc}">${yi(bv)}</span></div>
  </div>`;
const GREEN = 'text-[#00e000]', REDT = 'text-[#ff3232]', GRAY = 'text-[#c0c0c0]';
document.getElementById('stats1').innerHTML = [
  ['今开','5.65',GREEN,'均价','5.69',REDT],['最高','5.75',REDT,'量比','4.69','text-[#c000d0]'],
  ['最低','5.62',GREEN,'市值','30.7亿',GRAY],['现量','26',GREEN,'总量','33960',GRAY],['外盘','19742',REDT,'内盘','14218',GREEN]
].map(statRow).join('');
document.getElementById('stats2').innerHTML = [
  ['换手','0.63%',GRAY,'股本','5.44亿',GRAY],['净资','5.49',GRAY,'流通','5.43亿',GRAY],
  ['收益㈢','0.291',GRAY,'<span class="tracking-[-1px]">PE(动)</span>','14.5',GRAY]
].map(statRow).join('');

document.getElementById('flow').innerHTML = [
  ['净流入额',36,'360.4','19%'],['大宗流入',6,'70.6','4%'],['5日净流入额',3,'39.9','0%'],['5日大宗流入',29,'294.0','1%']
].map(([label, w, amount, pct]) =>
  `<div class="h-[28.4px] flex items-center leading-none text-[#ff3232]">
    <span class="w-[141px] pl-[3px] text-[23px] text-[#c0c0c0] tracking-[-0.2px]">${label}</span>
    <div class="w-[46px] flex"><i class="h-[10px] bg-[#ff3030]" style="width:${w}px"></i></div>
    <span class="w-[82px] text-right text-[20px] font-bold">${vol(amount)}</span>
    <span class="w-[62px] text-right text-[21px] font-bold">${pct}</span>
  </div>`).join('');

const trades = [
  ['09:45','5.68','0.1','S',1],['09:45','5.68','0.1','S',1],['09:45','5.68','8.6','S',2],['09:45','5.68','8.5','S',2],
  ['09:45','5.68','0.2','S',1],['09:45','5.68','19.4','S',34],['09:45','5.67','9.0','S',6],['09:45','5.68','1.2','S',4],
  ['09:45','5.68','0.1','B',1],['09:45','5.67','2.7','S',2],['09:45','5.68','0.5','B',2],['09:46','5.67','1.5','S',10],
  ['09:46','5.67','8.4','S',53],['09:46','5.67','5.1','S',11],['09:46','5.66','0.1','S',1],['09:46','5.67','0.3','B',3],
  ['09:46','5.67','0.7','B',4],['09:46','5.65','11.0','S',11],['09:46','5.65','0.5','S',1],['09:46','5.65','16.1','S',8],
  ['09:46','5.64','1.5','S',6]
];
document.getElementById('ticks').innerHTML = trades.map(([t, price, amount, side, n]) => {
  const pc = price === '5.66' ? 'text-[#f0f0f0]' : price < '5.66' ? 'text-[#00e000]' : 'text-[#ff3232]';
  const sc = side === 'S' ? 'text-[#00e000]' : 'text-[#ff3232]';
  return `<div class="h-[27px] flex items-center leading-none text-[20px] font-bold">
    <span class="w-[100px] pl-[2px] tracking-[0.6px]">${t}</span>
    <span class="w-[58px] text-right tracking-[0.4px] ${pc}">${price}</span>
    <span class="w-[94px] text-right text-[#c8c800]">${vol(amount)}</span>
    <span class="w-[24px] ml-[12px] text-center font-normal ${sc}">${side}</span>
    <span class="w-[42px] text-right text-[#808080]">${n}</span>
  </div>`;
}).join('');
</script>
</body>
</html>
